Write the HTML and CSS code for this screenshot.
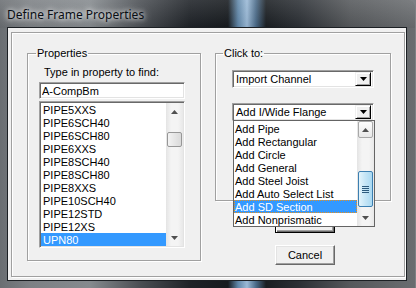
FILE: index.html
```html
<!DOCTYPE html>
<html lang="en">
<head>
    <meta charset="UTF-8">
    <title>Define Frame Properties</title>
    <link rel="stylesheet" href="styles.css">
</head>
<body>
<div class="window">
    <div class="titlebar"><span class="title">Define Frame Properties</span></div>
    <div class="client">
        <div class="panel">

            <!-- Properties list -->
            <fieldset class="group group-props">
                <legend>Properties</legend>
                <div class="group-body props-body">
                    <div class="hint">Type in property to find:</div>
                    <input class="find" type="text" value="A-CompBm">
                    <div class="listbox">
                        <ul class="items">
                            <li>PIPE5XXS</li>
                            <li>PIPE6SCH40</li>
                            <li>PIPE6SCH80</li>
                            <li>PIPE6XXS</li>
                            <li>PIPE8SCH40</li>
                            <li>PIPE8SCH80</li>
                            <li>PIPE8XXS</li>
                            <li>PIPE10SCH40</li>
                            <li>PIPE12STD</li>
                            <li>PIPE12XS</li>
                            <li class="sel">UPN80</li>
                        </ul>
                        <div class="vscroll">
                            <div class="arrow"><svg width="7" height="4"><polygon points="0,4 3.5,0 7,4" fill="#505050"/></svg></div>
                            <div class="track">
                                <div class="thumb thumb-props"></div>
                            </div>
                            <div class="arrow"><svg width="7" height="4"><polygon points="0,0 3.5,4 7,0" fill="#505050"/></svg></div>
                        </div>
                    </div>
                </div>
            </fieldset>

            <div class="side">
                <!-- Click to -->
                <fieldset class="group group-click">
                    <legend>Click to:</legend>
                    <div class="group-body click-body">
                        <div class="combo">
                            <span class="combo-text">Import Channel</span>
                            <span class="combo-btn"><svg width="7" height="4"><polygon points="0,0 3.5,4 7,0" fill="#000"/></svg></span>
                        </div>
                        <div class="combo combo-open">
                            <span class="combo-text">Add I/Wide Flange</span>
                            <span class="combo-btn"><svg width="7" height="4"><polygon points="0,0 3.5,4 7,0" fill="#000"/></svg></span>
                            <div class="droplist">
                                <ul class="items">
                                    <li>Add Pipe</li>
                                    <li>Add Rectangular</li>
                                    <li>Add Circle</li>
                                    <li>Add General</li>
                                    <li>Add Steel Joist</li>
                                    <li>Add Auto Select List</li>
                                    <li class="sel focus">Add SD Section</li>
                                    <li>Add Nonprismatic</li>
                                </ul>
                                <div class="vscroll">
                                    <div class="arrow arrow-hot"><svg width="7" height="4"><polygon points="0,4 3.5,0 7,4" fill="#505050"/></svg></div>
                                    <div class="track">
                                        <div class="thumb thumb-hot"><span></span><span></span><span></span><span></span></div>
                                    </div>
                                    <div class="arrow"><svg width="7" height="4"><polygon points="0,0 3.5,4 7,0" fill="#505050"/></svg></div>
                                </div>
                            </div>
                        </div>
                    </div>
                </fieldset>

                <div class="buttons">
                    <button class="btn btn-default">OK</button>
                    <button class="btn">Cancel</button>
                </div>
            </div>

        </div>
    </div>
</div>
</body>
</html>
```

FILE: styles.css
```css
body {
    margin: 0;
    background: #7e8184;
    font-family: "Liberation Sans", Arial, sans-serif;
    font-size: 11px;
    color: #000;
}

.window {
    width: 415px;
    height: 288px;
    display: flex;
    flex-direction: column;
    border-top-right-radius: 7px;
    overflow: hidden;
    background: linear-gradient(90deg, #6a6e72 0, #7c8084 30px, #858a8e 90px, #4a4e53 140px, #1e2227 190px, #161a1e 228px, #5f86a8 238px, #9ab9d6 247px, #4a6a88 256px, #1a1e22 266px, #2c3035 300px, #55585b 350px, #6a6d70 415px);
}

.titlebar {
    height: 28px;
    flex-shrink: 0;
    display: flex;
    align-items: center;
    padding-left: 7px;
    background: linear-gradient(180deg, rgba(255, 255, 255, 0.12), rgba(0, 0, 0, 0.05));
}

.title {
    font-family: "Noto Sans", "Open Sans", sans-serif;
    font-size: 12px;
    color: #0a0e14;
    text-shadow: 0 0 5px #fff, 0 0 9px rgba(255, 255, 255, 0.8);
    margin-top: 1px;
}

.client {
    margin: 0 9px 8px 8px;
    flex: 1;
    background: #f0f0f0;
    box-shadow: 0 0 0 1px #1c2024;
    display: flex;
}

.panel {
    flex: 1;
    margin: 4px 1px 3px 3px;
    border: 1px solid #a0a0a0;
    box-shadow: inset 1px 1px 0 #fff, 1px 1px 0 #fff;
    display: flex;
    align-items: flex-start;
    gap: 14px;
    padding: 13px 0 0 15px;
}

.group {
    margin: 0;
    padding: 0;
    min-width: 0;
    border: 1px solid #a0a0a0;
    box-shadow: inset 1px 1px 0 #fff, 1px 1px 0 #fff;
    box-sizing: border-box;
}

.group legend {
    padding: 0 1px;
    line-height: 14px;
}

.group-props {
    width: 174px;
    height: 215px;
}

.group-props legend {
    margin-left: 8px;
}

.group-click {
    width: 176px;
    height: 155px;
}

.group-click legend {
    margin-left: 7px;
}

.props-body {
    padding: 0 15px 0 11px;
}

.hint {
    margin: 6px 0 0 5px;
    line-height: 13px;
}

/* sunken edit fields: 1px border + 1px inset shadow = 2px edge */
.find, .listbox, .combo {
    box-sizing: border-box;
    border-style: solid;
    border-width: 1px;
    border-color: #a0a0a0 #fff #fff #a0a0a0;
    box-shadow: inset 1px 1px 0 #696969, inset -1px -1px 0 #e3e3e3;
    background: #fff;
}

.find {
    display: block;
    width: 146px;
    height: 17px;
    margin: 3px 0 0 0;
    padding: 0 0 0 2px;
    font: inherit;
    outline: none;
}

.listbox {
    width: 146px;
    height: 147px;
    margin-top: 2px;
    padding: 1px;
    display: flex;
}

.items {
    list-style: none;
    margin: 0;
    padding: 0;
    flex: 1;
    overflow: hidden;
    display: flex;
    flex-direction: column;
}

.items li {
    height: 13px;
    box-sizing: border-box;
    padding: 1px 0 0 2px;
    line-height: 12px;
    flex-shrink: 0;
    white-space: nowrap;
}

.items li.sel {
    background: #3399ff;
    color: #fff;
}

.items li.focus {
    outline: 1px dotted #e8901c;
    outline-offset: -1px;
}

.vscroll {
    width: 17px;
    display: flex;
    flex-direction: column;
    background: linear-gradient(90deg, #e4e4e4, #f4f4f4 30%, #f4f4f4 70%, #e8e8e8);
}

.arrow {
    height: 17px;
    display: flex;
    align-items: center;
    justify-content: center;
    flex-shrink: 0;
}

.arrow svg {
    display: block;
}

.arrow-hot {
    margin: 0 1px;
    border: 1px solid #a8a8a8;
    border-radius: 2px;
    background: linear-gradient(180deg, #fdfdfd, #e8e8e8);
    box-sizing: border-box;
}

.track {
    flex: 1;
    position: relative;
}

.thumb {
    position: absolute;
    left: 1px;
    right: 1px;
    box-sizing: border-box;
    border: 1px solid #979797;
    border-radius: 2px;
    background: linear-gradient(90deg, #f3f3f3, #e6e6e6 50%, #dadada);
}

.thumb-props {
    top: 12px;
    height: 15px;
}

.thumb-hot {
    top: 33px;
    height: 36px;
    border-color: #3c7fb1;
    background: linear-gradient(90deg, #e3f4fc, #c4e5f6 50%, #a9d9f2);
    display: flex;
    flex-direction: column;
    align-items: center;
    justify-content: center;
    gap: 1px;
}

.thumb-hot span {
    width: 7px;
    height: 1px;
    background: #2b5a7d;
}

/* Click to */
.click-body {
    padding: 10px 0 0 16px;
}

.combo {
    width: 142px;
    height: 18px;
    display: flex;
    align-items: center;
    padding: 1px;
    position: relative;
}

.combo + .combo {
    margin-top: 15px;
}

.combo-text {
    flex: 1;
    padding-left: 2px;
    line-height: 14px;
}

.combo-btn {
    width: 16px;
    height: 14px;
    margin-right: 1px;
    box-sizing: border-box;
    display: flex;
    align-items: center;
    justify-content: center;
    background: #f0f0f0;
    border-style: solid;
    border-width: 1px;
    border-color: #f0f0f0 #000 #000 #f0f0f0;
    box-shadow: inset 1px 1px 0 #fff, inset -1px -1px 0 #a0a0a0;
}

.droplist {
    position: absolute;
    top: 100%;
    left: 0;
    width: 142px;
    height: 107px;
    box-sizing: border-box;
    border: 1px solid #646464;
    background: #fff;
    display: flex;
    z-index: 5;
}

.droplist .items {
    padding-top: 1px;
}

.droplist .items li {
    padding-left: 1px;
}

/* dialog buttons */
.buttons {
    display: flex;
    flex-direction: column;
    gap: 12px;
    margin: 12px 0 0 60px;
}

.btn {
    width: 60px;
    height: 20px;
    padding: 0;
    font: inherit;
    color: #000;
    background: #f0f0f0;
    border-style: solid;
    border-width: 1px;
    border-color: #fff #696969 #696969 #fff;
    box-shadow: inset -1px -1px 0 #a0a0a0, inset 1px 1px 0 #e3e3e3;
}

.btn-default {
    border-color: #000;
    box-shadow: inset 1px 1px 0 #fff, inset -1px -1px 0 #696969, inset -2px -2px 0 #a0a0a0;
}
```
